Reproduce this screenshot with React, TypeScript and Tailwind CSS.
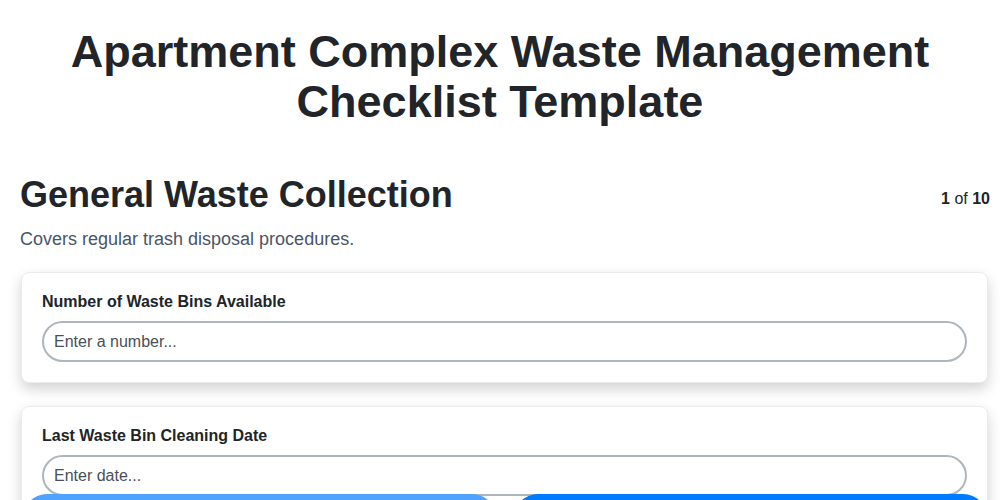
import React from 'react';

const font = { fontFamily: '"Liberation Sans", Arial, sans-serif' };

function Field({ label, placeholder }: { label: string; placeholder: string }) {
  return (
    <div className="bg-white border border-[#e9ecef] rounded-lg p-5 shadow-[0_6px_14px_rgba(0,0,0,0.18)]">
      <label className="block text-base leading-[18px] font-bold text-[#212529] mb-[10px]">{label}</label>
      <input
        className="w-full h-[41px] rounded-full border-2 border-[#adb5bd] px-[10px] text-base text-[#495057] placeholder:text-[#495057] outline-none"
        placeholder={placeholder}
      />
    </div>
  );
}

export default function App() {
  return (
    <div className="min-h-screen bg-white text-[#212529]" style={font}>
      <h1 className="text-[45px] leading-[50px] font-bold text-center pt-[27px] px-12">
        Apartment Complex Waste Management Checklist Template
      </h1>
      <div className="pl-5 pr-[10px] mt-[46px]">
        <div className="flex items-start justify-between">
          <h2 className="text-[36px] leading-[44px] font-bold">General Waste Collection</h2>
          <div className="text-base mt-[14px]">
            <span className="font-bold">1</span> of <span className="font-bold">10</span>
          </div>
        </div>
        <p className="text-lg leading-[24px] text-[#4a5568] mt-[10px]">Covers regular trash disposal procedures.</p>
        <div className="flex flex-col gap-[23px] mt-[21px] pl-px pr-[2px]">
          <Field label="Number of Waste Bins Available" placeholder="Enter a number..." />
          <Field label="Last Waste Bin Cleaning Date" placeholder="Enter date..." />
        </div>
      </div>
      <div className="fixed left-0 right-0 bottom-[-44px] flex gap-4 pl-[22px] pr-[12px]">
        <button className="flex-1 h-[50px] rounded-[25px] bg-[#4da3ff] text-white font-bold pt-[24px]">Previous</button>
        <button className="flex-1 h-[50px] rounded-[25px] bg-[#007bff] text-white font-bold pt-[24px]">Next</button>
      </div>
    </div>
  );
}
